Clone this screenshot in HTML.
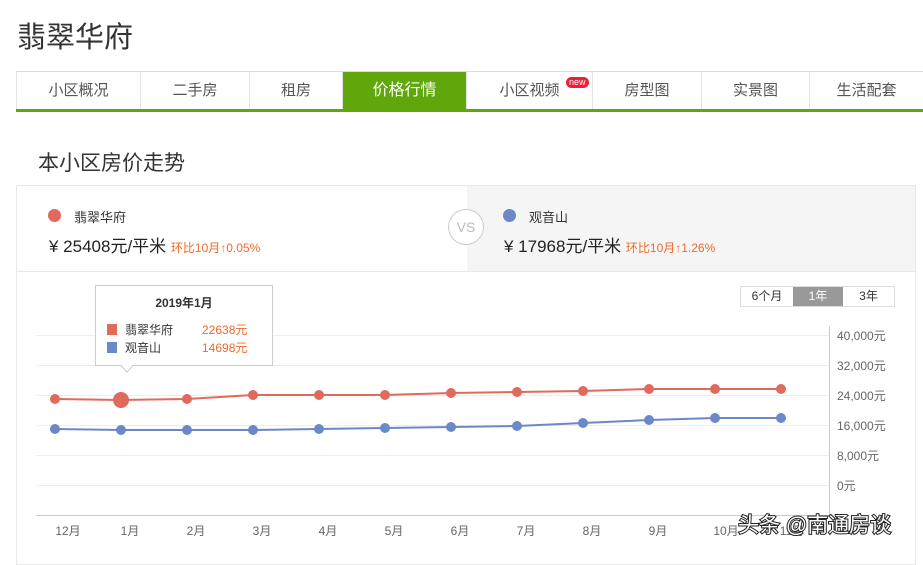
<!DOCTYPE html>
<html><head><meta charset="utf-8"><style>
*{margin:0;padding:0;box-sizing:border-box}
body{width:923px;height:550px;background:#fff;font-family:"Liberation Sans","Noto Sans CJK SC",sans-serif;position:relative;overflow:hidden;color:#333}
.a{position:absolute;white-space:nowrap}
.tab{position:absolute;top:72px;height:38px;line-height:38px;text-align:center;font-size:15px;color:#555;border-right:1px solid #e3e3e3}
</style></head><body>
<div class="a" style="left:17px;top:14px;font-size:29px;color:#333">翡翠华府</div>
<div class="a" style="left:16px;top:71px;width:907px;height:1px;background:#ddd"></div>
<div class="tab" style="left:16px;width:125px;border-left:1px solid #e3e3e3">小区概况</div>
<div class="tab" style="left:141px;width:109px">二手房</div>
<div class="tab" style="left:250px;width:93px">租房</div>
<div class="tab" style="left:343px;width:124px;background:#5fa70a;color:#fff;font-size:16px">价格行情</div>
<div class="tab" style="left:467px;width:126px">小区视频</div>
<div class="a" style="left:566px;top:77px;background:#e8203a;color:#fff;font-size:9px;line-height:11px;padding:0 3px;border-radius:6px">new</div>
<div class="tab" style="left:593px;width:109px">房型图</div>
<div class="tab" style="left:702px;width:108px">实景图</div>
<div class="tab" style="left:810px;width:113px;border-right:none">生活配套</div>
<div class="a" style="left:16px;top:109px;width:907px;height:3px;background:#5fa70a"></div>
<div class="a" style="left:38px;top:147px;font-size:21px;color:#333">本小区房价走势</div>
<div class="a" style="left:16px;top:185px;width:900px;height:380px;border:1px solid #e8e8e8"></div>
<div class="a" style="left:467px;top:186px;width:448px;height:85px;background:#f5f5f5"></div>
<div class="a" style="left:17px;top:271px;width:898px;height:1px;background:#e8e8e8"></div>
<div class="a" style="left:448px;top:209px;width:36px;height:36px;border:1px solid #ccc;border-radius:50%;background:#fff;text-align:center;line-height:34px;color:#bbb;font-size:14px">VS</div>
<div class="a" style="left:48px;top:209px;width:13px;height:13px;border-radius:50%;background:#e06a5c"></div>
<div class="a" style="left:74px;top:207px;font-size:13px">翡翠华府</div>
<div class="a" style="left:49px;top:232px;font-size:17px;color:#222">¥ 25408元/平米 <span style="font-size:12px;color:#f06a2a">环比10月↑0.05%</span></div>
<div class="a" style="left:503px;top:209px;width:13px;height:13px;border-radius:50%;background:#6b88c8"></div>
<div class="a" style="left:529px;top:207px;font-size:13px">观音山</div>
<div class="a" style="left:504px;top:232px;font-size:17px;color:#222">¥ 17968元/平米 <span style="font-size:12px;color:#f06a2a">环比10月↑1.26%</span></div>
<div class="a" style="left:740px;top:286px;width:155px;height:21px;border:1px solid #ddd;font-size:12px;line-height:19px;display:flex">
<span style="width:52px;text-align:center">6个月</span><span style="width:50px;text-align:center;background:#999;color:#fff">1年</span><span style="flex:1;text-align:center">3年</span></div>
<svg class="a" style="left:0;top:0" width="923" height="550">
<g stroke="#eee" stroke-width="1">
<line x1="36" y1="335.5" x2="830" y2="335.5"/><line x1="36" y1="365.5" x2="830" y2="365.5"/><line x1="36" y1="395.5" x2="830" y2="395.5"/><line x1="36" y1="425.5" x2="830" y2="425.5"/><line x1="36" y1="455.5" x2="830" y2="455.5"/><line x1="36" y1="485.5" x2="830" y2="485.5"/>
</g>
<line x1="36" y1="515.5" x2="830" y2="515.5" stroke="#ccc"/>
<line x1="829.5" y1="326" x2="829.5" y2="515" stroke="#ccc"/>
<g font-size="12" fill="#666" font-family="Liberation Sans,Noto Sans CJK SC,sans-serif">
<text x="837" y="340">40,000元</text><text x="837" y="370">32,000元</text><text x="837" y="400">24,000元</text><text x="837" y="430">16,000元</text><text x="837" y="460">8,000元</text><text x="837" y="490">0元</text>
<g text-anchor="middle"><text x="68" y="535">12月</text><text x="130" y="535">1月</text><text x="196" y="535">2月</text><text x="262" y="535">3月</text><text x="328" y="535">4月</text><text x="394" y="535">5月</text><text x="460" y="535">6月</text><text x="526" y="535">7月</text><text x="592" y="535">8月</text><text x="658" y="535">9月</text><text x="726" y="535">10月</text><text x="792" y="535">11月</text></g>
</g>
<polyline fill="none" stroke="#e06a5c" stroke-width="2" points="55,399 121,400 187,399 253,395 319,395 385,395 451,393 517,392 583,391 649,389 715,389 781,389"/>
<polyline fill="none" stroke="#6b88c8" stroke-width="2" points="55,429 121,430 187,430 253,430 319,429 385,428 451,427 517,426 583,423 649,420 715,418 781,418"/>
<g fill="#e06a5c"><circle cx="55" cy="399" r="5"/><circle cx="121" cy="400" r="8"/><circle cx="187" cy="399" r="5"/><circle cx="253" cy="395" r="5"/><circle cx="319" cy="395" r="5"/><circle cx="385" cy="395" r="5"/><circle cx="451" cy="393" r="5"/><circle cx="517" cy="392" r="5"/><circle cx="583" cy="391" r="5"/><circle cx="649" cy="389" r="5"/><circle cx="715" cy="389" r="5"/><circle cx="781" cy="389" r="5"/></g>
<g fill="#6b88c8"><circle cx="55" cy="429" r="5"/><circle cx="121" cy="430" r="5"/><circle cx="187" cy="430" r="5"/><circle cx="253" cy="430" r="5"/><circle cx="319" cy="429" r="5"/><circle cx="385" cy="428" r="5"/><circle cx="451" cy="427" r="5"/><circle cx="517" cy="426" r="5"/><circle cx="583" cy="423" r="5"/><circle cx="649" cy="420" r="5"/><circle cx="715" cy="418" r="5"/><circle cx="781" cy="418" r="5"/></g>
<path d="M95.5,285.5H272.5V365.5H133L127,372L121,365.5H95.5Z" fill="#fff" stroke="#ccc"/>
<g font-family="Liberation Sans,Noto Sans CJK SC,sans-serif" font-size="12">
<text x="184" y="307" text-anchor="middle" font-weight="bold" fill="#333">2019年1月</text>
<rect x="107" y="324" width="10" height="11" fill="#e06a5c"/><text x="125" y="334" fill="#333">翡翠华府</text><text x="202" y="334" fill="#f06a2a">22638元</text>
<rect x="107" y="342" width="10" height="11" fill="#6b88c8"/><text x="125" y="352" fill="#333">观音山</text><text x="202" y="352" fill="#f06a2a">14698元</text>
</g>
<text x="738" y="532" font-size="21" fill="#fff" stroke="#222" stroke-width="2" paint-order="stroke" font-family="Liberation Sans,Noto Sans CJK SC,sans-serif">头条 @南通房谈</text>
</svg>
</body></html>
